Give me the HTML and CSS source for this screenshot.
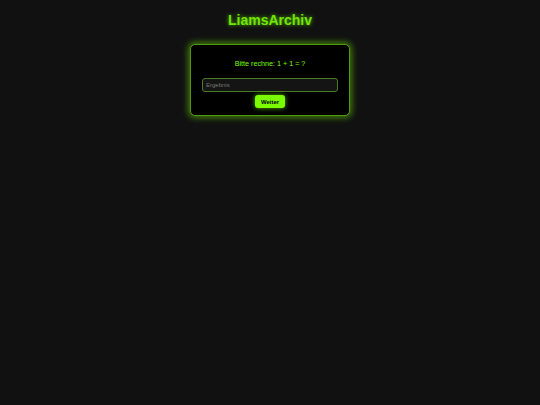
FILE: index.html
```html
<!DOCTYPE html>
<html lang="de">
<head>
<meta charset="utf-8">
<title>LiamsArchiv</title>
<link rel="stylesheet" href="styles.css">
</head>
<body>
  <h1 class="title">LiamsArchiv</h1>
  <div class="card">
    <p class="question">Bitte rechne: 1 + 1 = ?</p>
    <input class="answer" type="text" placeholder="Ergebnis">
    <button class="next" type="button">Weiter</button>
  </div>
</body>
</html>
```

FILE: styles.css
```css
html, body {
  margin: 0;
  padding: 0;
  height: 100%;
  background: #111111;
}

body {
  font-family: "Liberation Sans", Arial, sans-serif;
  display: flex;
  flex-direction: column;
  align-items: center;
}

.title {
  margin: 12px 0 0;
  font-size: 14px;
  line-height: 16px;
  font-weight: bold;
  color: #72e600;
  text-shadow: 0 0 4px rgba(124, 252, 0, 0.7);
}

.card {
  box-sizing: border-box;
  width: 160px;
  margin-top: 16px;
  padding: 15px 11px 7px;
  background: #000;
  border: 1px solid #4f9a12;
  border-radius: 5px;
  box-shadow: 0 0 6px 2px rgba(124, 252, 0, 0.45);
  display: flex;
  flex-direction: column;
  align-items: center;
}

.question {
  margin: 0 0 10px;
  font-size: 7.2px;
  line-height: 8px;
  color: #7cfc00;
}

.answer {
  box-sizing: border-box;
  width: 100%;
  height: 14px;
  margin: 0 0 3px;
  padding: 0 3px;
  background: #141414;
  border: 1px solid #4c7a22;
  border-radius: 3px;
  font-family: "Liberation Sans", Arial, sans-serif;
  font-size: 6px;
  color: #ccc;
  outline: none;
}

.answer::placeholder {
  color: #777;
}

.next {
  box-sizing: border-box;
  width: 30px;
  height: 13px;
  padding: 0;
  background: #7cfc00;
  border: none;
  border-radius: 3px;
  font-family: "Liberation Sans", Arial, sans-serif;
  font-size: 6px;
  font-weight: bold;
  color: #000;
  box-shadow: 0 0 5px rgba(124, 252, 0, 0.7);
}
```
